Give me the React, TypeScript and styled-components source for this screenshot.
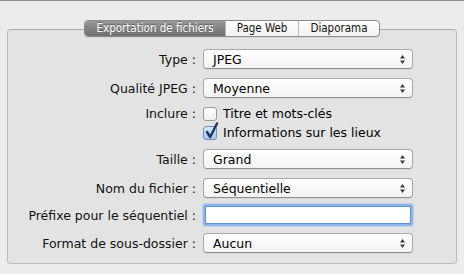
import React from "react";
import styled, { createGlobalStyle } from "styled-components";

const GlobalStyle = createGlobalStyle`
  html, body { margin: 0; padding: 0; }
  body {
    font-family: "Lucida Grande", "DejaVu Sans", sans-serif;
    font-size: 12.5px;
    color: #000;
  }
`;

const tabs = ["Exportation de fichiers", "Page Web", "Diaporama"];

const PopupArrows = () => (
  <svg width="7" height="11" viewBox="0 0 7 11">
    <path d="M3.5 1 L6 4.5 L1 4.5 Z" fill="#3a3a3a" />
    <path d="M3.5 10 L6 6.5 L1 6.5 Z" fill="#3a3a3a" />
  </svg>
);

const Popup = ({ value }: { value: string }) => (
  <Select>
    <span>{value}</span>
    <PopupArrows />
  </Select>
);

const Check = ({ checked, label }: { checked?: boolean; label: string }) => (
  <CheckLabel>
    <Box $checked={checked}>
      {checked && (
        <svg width="15" height="18" viewBox="0 0 15 18">
          <path d="M3 10 L6.2 15 L13 1.5" fill="none" stroke="#1d3561" strokeWidth="2.4" strokeLinecap="round" strokeLinejoin="round" />
        </svg>
      )}
    </Box>
    {label}
  </CheckLabel>
);

export default function App() {
  return (
    <Window>
      <GlobalStyle />
      <TabBar>
        {tabs.map((t, i) => (
          <Tab key={t} $active={i === 0}>
            {t}
          </Tab>
        ))}
      </TabBar>
      <Panel>
        <Row $top={0}>
          <Label>Type :</Label>
          <Popup value="JPEG" />
        </Row>
        <Row $top={9}>
          <Label>Qualité JPEG :</Label>
          <Popup value="Moyenne" />
        </Row>
        <CheckRow $top={6}>
          <Label>Inclure :</Label>
          <Check label="Titre et mots-clés" />
        </CheckRow>
        <CheckRow $top={0}>
          <Label />
          <Check checked label="Informations sur les lieux" />
        </CheckRow>
        <Row $top={7}>
          <Label>Taille :</Label>
          <Popup value="Grand" />
        </Row>
        <Row $top={9}>
          <Label>Nom du fichier :</Label>
          <Popup value="Séquentielle" />
        </Row>
        <FieldRow $top={6}>
          <Label>Préfixe pour le séquentiel :</Label>
          <TextField />
        </FieldRow>
        <Row $top={7}>
          <Label>Format de sous-dossier :</Label>
          <Popup value="Aucun" />
        </Row>
      </Panel>
    </Window>
  );
}

const Window = styled.div`
  width: 464px;
  height: 274px;
  box-sizing: border-box;
  background: #ececec;
  border-top: 1px solid #8e8e8e;
  padding-top: 19px;
  display: flex;
  flex-direction: column;
  overflow: hidden;
`;

const TabBar = styled.div`
  align-self: center;
  display: flex;
  height: 17px;
  box-sizing: border-box;
  border: 1px solid #8c8c8c;
  border-radius: 4px;
  overflow: hidden;
  margin-bottom: -8px;
  position: relative;
  z-index: 1;
  background: linear-gradient(#ffffff, #f1f1f1);
  box-shadow: 0 1px 0 rgba(0, 0, 0, 0.06);
`;

const Tab = styled.div<{ $active?: boolean }>`
  display: flex;
  align-items: center;
  padding: 0 11px;
  font-family: "Lucida Grande", "DejaVu Sans Condensed", "DejaVu Sans", sans-serif;
  font-size: 11.5px;
  line-height: 15px;
  color: ${(p) => (p.$active ? "#fff" : "#111")};
  background: ${(p) => (p.$active ? "linear-gradient(#989898, #6f6f6f)" : "transparent")};
  text-shadow: ${(p) => (p.$active ? "0 -1px 0 rgba(0,0,0,0.35)" : "none")};
  & + & {
    border-left: 1px solid #b8b8b8;
  }
`;

const Panel = styled.div`
  margin: 0 7px;
  border: 1px solid #bcbcbc;
  border-top-color: #ababab;
  border-radius: 4px;
  background: #e3e3e3;
  padding: 19px 0 10px;
  display: flex;
  flex-direction: column;
`;

const Row = styled.div<{ $top: number }>`
  display: grid;
  grid-template-columns: 188px 210px;
  column-gap: 7px;
  align-items: center;
  height: 20px;
  margin-top: ${(p) => p.$top}px;
`;

const CheckRow = styled(Row)`
  height: 19px;
`;

const FieldRow = styled(Row)`
  height: 22px;
`;

const Label = styled.div`
  text-align: right;
  white-space: nowrap;
  color: #111;
`;

const Select = styled.div`
  height: 20px;
  box-sizing: border-box;
  display: flex;
  align-items: center;
  justify-content: space-between;
  padding: 0 6px 0 9px;
  border: 1px solid #a8a8a8;
  border-bottom-color: #8f8f8f;
  border-radius: 4px;
  background: linear-gradient(#ffffff, #f3f3f3);
  box-shadow: 0 1px 0 rgba(0, 0, 0, 0.05);
  color: #000;
`;

const TextField = styled.div`
  height: 18px;
  margin: 0 2px;
  box-sizing: border-box;
  background: #fff;
  border: 1px solid #5c8fd6;
  border-radius: 1px;
  box-shadow: 0 0 0 2px #8cb5ec, 0 0 2px 2px rgba(90, 140, 220, 0.6);
`;

const CheckLabel = styled.div`
  display: flex;
  align-items: center;
  gap: 6px;
  white-space: nowrap;
  color: #000;
`;

const Box = styled.div<{ $checked?: boolean }>`
  width: 14px;
  height: 14px;
  box-sizing: border-box;
  border: 1px solid ${(p) => (p.$checked ? "#6d8fba" : "#9a9a9a")};
  border-radius: 3px;
  background: ${(p) => (p.$checked ? "linear-gradient(#d8e8fa, #a9c9ef)" : "linear-gradient(#ffffff, #eeeeee)")};
  position: relative;
  flex: none;
  & svg {
    position: absolute;
    left: 0;
    top: -5px;
  }
`;
